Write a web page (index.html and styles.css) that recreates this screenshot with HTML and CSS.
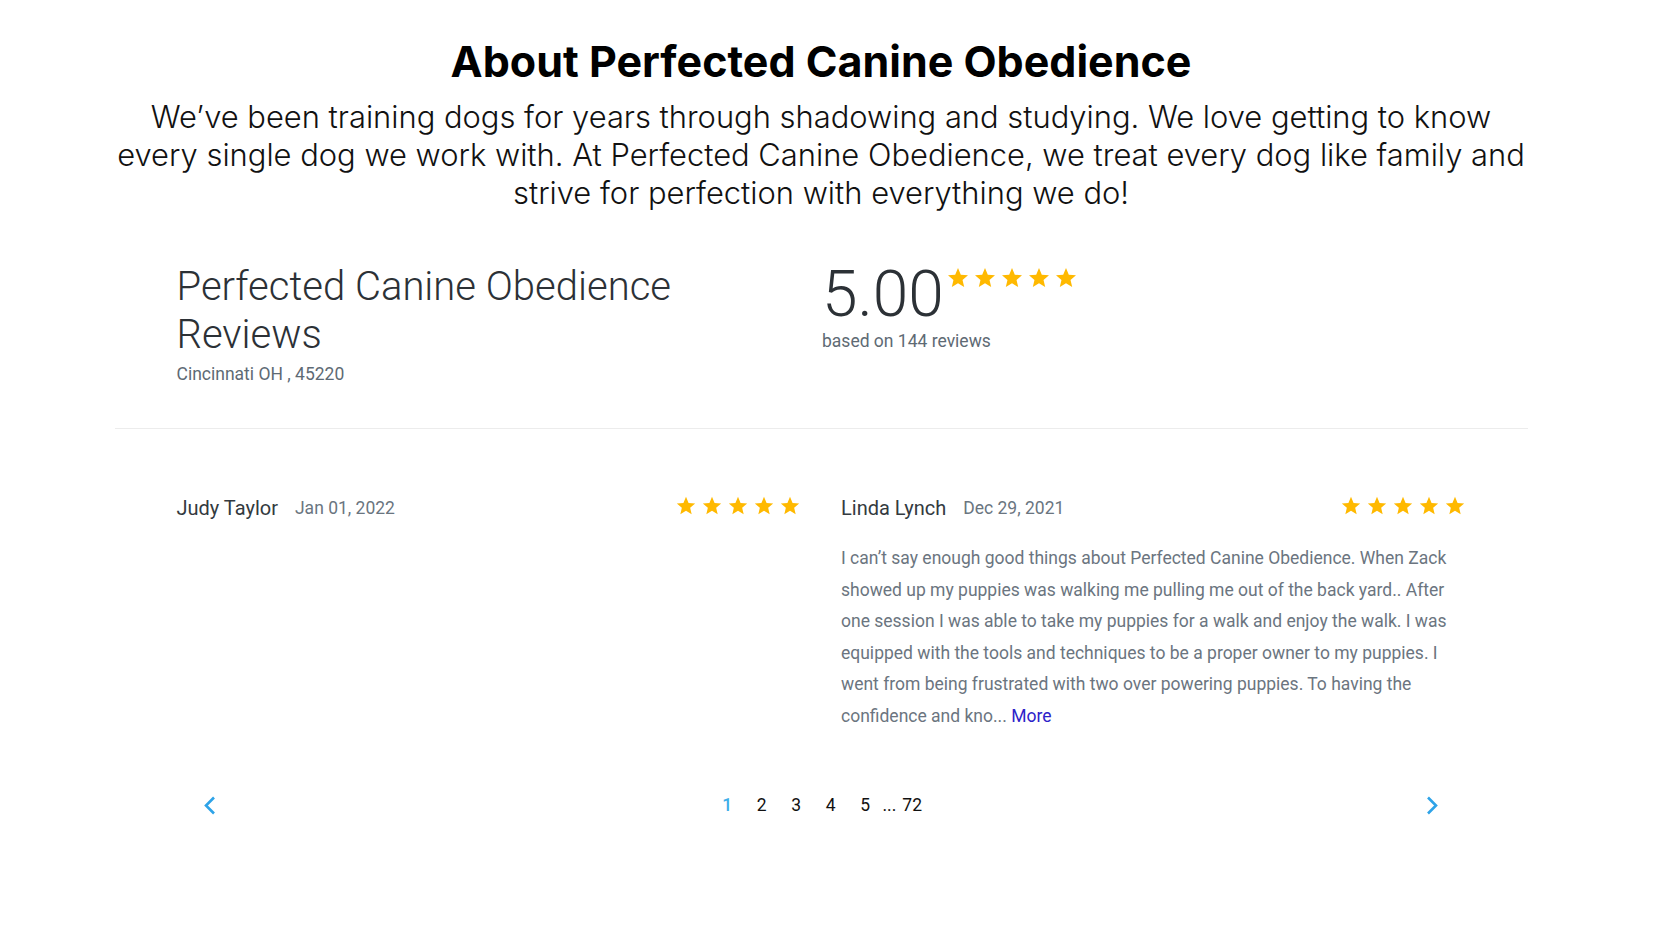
FILE: index.html
```html
<!DOCTYPE html>
<html lang="en">
<head>
<meta charset="utf-8">
<title>About Perfected Canine Obedience</title>
<link rel="stylesheet" href="styles.css">
</head>
<body>
<svg class="defs" width="0" height="0" aria-hidden="true">
  <symbol id="star" viewBox="0 0 24 24">
    <path d="M12 17.27L18.18 21l-1.64-7.03L22 9.24l-7.19-.61L12 2 9.19 8.63 2 9.24l5.46 4.73L5.82 21z"/>
  </symbol>
</svg>

<main class="page-wrap">
<section class="about">
  <h1 class="about-title">About Perfected Canine Obedience</h1>
  <p class="about-text">We’ve been training dogs for years through shadowing and studying. We love getting to know<br>every single dog we work with. At Perfected Canine Obedience, we treat every dog like family and<br>strive for perfection with everything we do!</p>
</section>

<section class="widget">
  <div class="summary">
    <div class="biz">
      <h2 class="biz-name">Perfected Canine Obedience Reviews</h2>
      <div class="biz-loc">Cincinnati OH , 45220</div>
    </div>
    <div class="score">
      <div class="score-row">
        <span class="score-num">5.00</span>
        <span class="stars stars-lg">
          <svg><use href="#star"/></svg><svg><use href="#star"/></svg><svg><use href="#star"/></svg><svg><use href="#star"/></svg><svg><use href="#star"/></svg>
        </span>
      </div>
      <div class="score-sub">based on 144 reviews</div>
    </div>
  </div>

  <div class="divider"></div>

  <div class="review-list">
    <article class="review">
      <header class="review-head">
        <span class="review-name">Judy Taylor</span>
        <span class="review-date">Jan 01, 2022</span>
        <span class="stars stars-sm">
          <svg><use href="#star"/></svg><svg><use href="#star"/></svg><svg><use href="#star"/></svg><svg><use href="#star"/></svg><svg><use href="#star"/></svg>
        </span>
      </header>
    </article>
    <article class="review">
      <header class="review-head">
        <span class="review-name">Linda Lynch</span>
        <span class="review-date">Dec 29, 2021</span>
        <span class="stars stars-sm">
          <svg><use href="#star"/></svg><svg><use href="#star"/></svg><svg><use href="#star"/></svg><svg><use href="#star"/></svg><svg><use href="#star"/></svg>
        </span>
      </header>
      <p class="review-text">I can’t say enough good things about Perfected Canine Obedience. When Zack showed up my puppies was walking me pulling me out of the back yard.. After one session I was able to take my puppies for a walk and enjoy the walk. I was equipped with the tools and techniques to be a proper owner to my puppies. I went from being frustrated with two over powering puppies. To having the confidence and kno... <a class="more" href="#">More</a></p>
    </article>
  </div>

  <nav class="pager">
    <a class="pager-arrow" href="#" aria-label="Previous">
      <svg viewBox="0 0 12 20"><polyline points="10,2 2,10 10,18"/></svg>
    </a>
    <div class="pages">
      <a class="page current" href="#">1</a>
      <a class="page" href="#">2</a>
      <a class="page" href="#">3</a>
      <a class="page" href="#">4</a>
      <a class="page" href="#">5</a>
      <span class="ellipsis">...</span>
      <a class="page last" href="#">72</a>
    </div>
    <a class="pager-arrow" href="#" aria-label="Next">
      <svg viewBox="0 0 12 20"><polyline points="2,2 10,10 2,18"/></svg>
    </a>
  </nav>
</section>
</main>
</body>
</html>
```

FILE: styles.css
```css
* { box-sizing: border-box; }

body {
  margin: 0;
  background: #fff;
  font-family: Roboto, "Liberation Sans", sans-serif;
}

.defs { position: absolute; width: 0; height: 0; overflow: hidden; }

.page-wrap {
  width: 1642px;
}

/* About */
.about {
  text-align: center;
  padding-top: 36px;
}
.about-title {
  margin: 0;
  font-family: Inter, "Liberation Sans", sans-serif;
  font-weight: 700;
  font-size: 43px;
  line-height: 50px;
  color: #000;
}
.about-text {
  margin: 12px 0 0;
  font-family: Inter, "Liberation Sans", sans-serif;
  font-weight: 300;
  font-size: 30.9px;
  line-height: 38px;
  color: #111;
  white-space: nowrap;
}

/* Widget */
.widget {
  width: 1413px;
  margin: 51px auto 0;
}

.summary {
  display: grid;
  grid-template-columns: 1fr 1fr;
  padding: 0 62px;
}
.biz { padding-right: 20px; }
.biz-name {
  margin: 0;
  font-weight: 300;
  font-size: 40px;
  line-height: 48px;
  color: #2c3136;
}
.biz-loc {
  margin-top: 5px;
  font-size: 17.5px;
  line-height: 20px;
  color: #5e6a74;
}

.score { padding-left: 1px; }
.score-row {
  display: flex;
  align-items: flex-start;
}
.score-num {
  font-weight: 300;
  font-size: 64px;
  line-height: 64px;
  color: #2c3136;
}
.score-sub {
  margin-top: 4px;
  font-size: 17.5px;
  line-height: 20px;
  color: #5e6a74;
}

.stars {
  display: flex;
  fill: #ffb900;
}
.stars-lg {
  margin-left: 2px;
  margin-top: 3px;
  gap: 3px;
}
.stars-lg svg { width: 24px; height: 24px; }
.stars-sm {
  margin-left: auto;
  margin-bottom: 4px;
  gap: 4px;
}
.stars-sm svg { width: 22px; height: 22px; }

.divider {
  margin-top: 44px;
  border-top: 1px solid #ececec;
}

/* Reviews */
.review-list {
  display: grid;
  grid-template-columns: 1fr 1fr;
  column-gap: 40px;
  padding: 0 62px;
  margin-top: 67px;
}
.review-head {
  display: flex;
  align-items: center;
  height: 24px;
}
.review-name {
  font-size: 20px;
  color: #333a40;
}
.review-date {
  margin-left: 17px;
  font-size: 17.5px;
  color: #6a7580;
}
.review-text {
  margin: 23px 0 0;
  font-size: 17.5px;
  line-height: 31.5px;
  color: #6b7580;
}
.more {
  color: #2d22c9;
  text-decoration: none;
}

/* Pager */
.pager {
  display: flex;
  align-items: center;
  justify-content: space-between;
  margin: 61px 62px 0;
  padding: 0 27px;
  height: 24px;
}
.pager-arrow {
  display: flex;
  width: 12px;
  height: 21px;
}
.pager-arrow svg {
  width: 12px;
  height: 21px;
  fill: none;
  stroke: #2ea3e8;
  stroke-width: 2.6;
}
.pages {
  display: flex;
  align-items: center;
  margin-right: 10px;
  font-size: 17.5px;
  line-height: 24px;
}
.page {
  color: #111;
  text-decoration: none;
  width: 34.5px;
  text-align: center;
}
.page.current { color: #3daee9; font-weight: 500; }
.ellipsis { color: #111; margin: 0 6px 0 0; }
.page.last { width: auto; }
```
